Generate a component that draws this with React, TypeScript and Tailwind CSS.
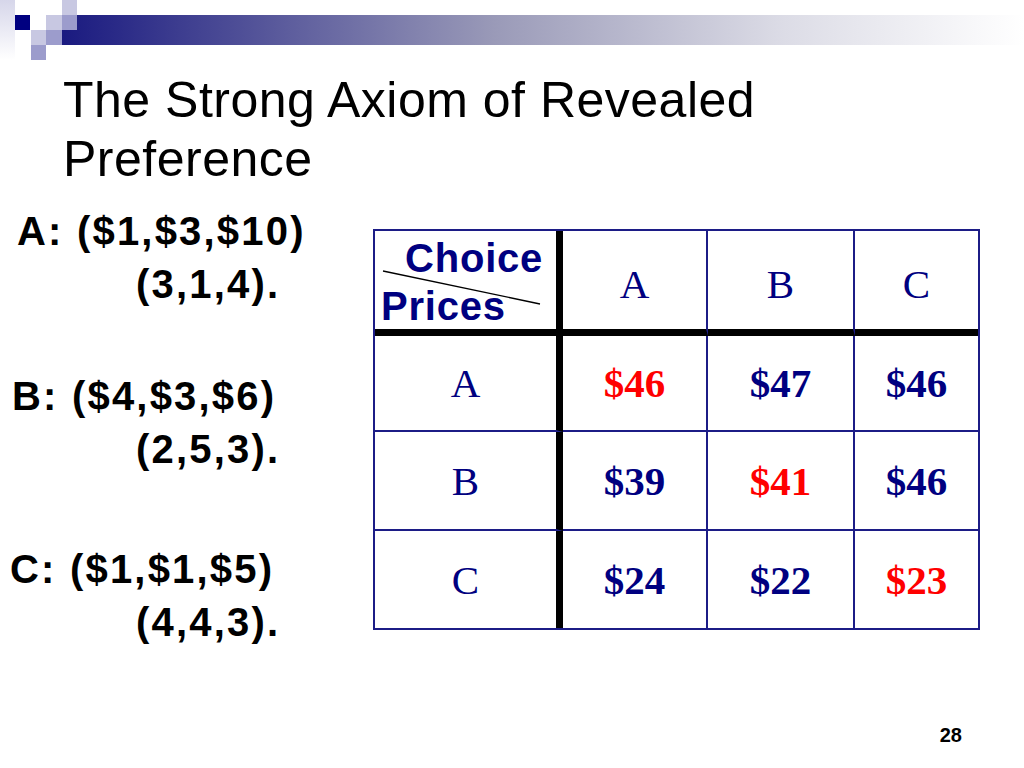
import React from "react";

const NAVY = "text-[#000080]";

function Header() {
  return (
    <svg width="1024" height="60" viewBox="0 0 1024 60" className="block">
      <defs>
        <linearGradient id="bar" x1="0" x2="1" y1="0" y2="0">
          <stop offset="0" stopColor="#1a1a80" />
          <stop offset="0.45" stopColor="#9a9ab8" />
          <stop offset="0.75" stopColor="#dcdce6" />
          <stop offset="1" stopColor="#ffffff" />
        </linearGradient>
        <linearGradient id="strip" x1="0" x2="0" y1="0" y2="1">
          <stop offset="0" stopColor="#d6d6ea" />
          <stop offset="1" stopColor="#ffffff" />
        </linearGradient>
      </defs>
      <rect x="0" y="0" width="15" height="60" fill="url(#strip)" />
      <rect x="62" y="15" width="962" height="30" fill="url(#bar)" />
      <rect x="62" y="0" width="15" height="15" fill="#c8c8e2" />
      <rect x="15" y="15" width="15" height="15" fill="#000080" />
      <rect x="46" y="15" width="16" height="15" fill="#c8c8e2" />
      <rect x="62" y="15" width="15" height="15" fill="#9c9ccc" />
      <rect x="31" y="30" width="15" height="15" fill="#c8c8e2" />
      <rect x="46" y="30" width="16" height="15" fill="#9c9ccc" />
      <rect x="31" y="45" width="15" height="15" fill="#9c9ccc" />
    </svg>
  );
}

function Cell({
  children,
  right,
  bottom,
  className = "",
}: {
  children?: React.ReactNode;
  right: "thick" | "thin" | "none";
  bottom: "thick" | "thin" | "none";
  className?: string;
}) {
  const r =
    right === "thick"
      ? "border-r-[7px] border-r-black"
      : right === "thin"
      ? "border-r-2 border-r-[#1c1c86]"
      : "";
  const b =
    bottom === "thick"
      ? "border-b-[7px] border-b-black"
      : bottom === "thin"
      ? "border-b-2 border-b-[#1c1c86]"
      : "";
  return (
    <div className={`flex items-center justify-center ${r} ${b} ${className}`}>
      {children}
    </div>
  );
}

const serif = "font-['Liberation_Serif','Times_New_Roman',serif] text-[41px] leading-[40px]";

function Val({ v, red }: { v: string; red?: boolean }) {
  return (
    <span className={`${serif} font-bold ${red ? "text-[#ff0000]" : NAVY}`}>{v}</span>
  );
}
function Lbl({ v }: { v: string }) {
  return <span className={`${serif} ${NAVY}`}>{v}</span>;
}

function Table() {
  const rows = [
    { l: "A", v: ["$46", "$47", "$46"], red: 0 },
    { l: "B", v: ["$39", "$41", "$46"], red: 1 },
    { l: "C", v: ["$24", "$22", "$23"], red: 2 },
  ];
  return (
    <div className="self-start mt-[24px] w-[607px] border-2 border-[#1c1c86] grid grid-cols-[188px_145px_147px_123px] grid-rows-[105px_96px_99px_97px]">
      <Cell right="thick" bottom="thick" className="relative !block">
        <div className="pt-[3px] font-['Liberation_Sans',Arial,sans-serif] font-bold text-[40px] leading-[48px] tracking-[0.8px] text-[#000080]">
          <div className="pl-[30px]">Choice</div>
          <div className="pl-[6px]">Prices</div>
        </div>
        <svg className="absolute left-0 top-0" width="181" height="98" viewBox="0 0 181 98">
          <line x1="8" y1="40" x2="165" y2="73" stroke="#000" strokeWidth="1.3" />
        </svg>
      </Cell>
      <Cell right="thin" bottom="thick" className="pt-2">
        <Lbl v="A" />
      </Cell>
      <Cell right="thin" bottom="thick" className="pt-2">
        <Lbl v="B" />
      </Cell>
      <Cell right="none" bottom="thick" className="pt-2">
        <Lbl v="C" />
      </Cell>
      {rows.map((row, ri) => {
        const bottom = ri === 2 ? "none" : "thin";
        return (
          <React.Fragment key={row.l}>
            <Cell right="thick" bottom={bottom}>
              <Lbl v={row.l} />
            </Cell>
            {row.v.map((v, ci) => (
              <Cell key={ci} right={ci === 2 ? "none" : "thin"} bottom={bottom}>
                <Val v={v} red={ci === row.red} />
              </Cell>
            ))}
          </React.Fragment>
        );
      })}
    </div>
  );
}

function Bundle({
  a,
  b,
  pl,
  mt,
}: {
  a: string;
  b: string;
  pl: string;
  mt: string;
}) {
  return (
    <div className={`${mt} font-['Liberation_Sans',Arial,sans-serif] font-bold text-[40px] leading-[53px] tracking-[2.2px] text-black`}>
      <div className={pl}>{a}</div>
      <div className="pl-[136px]">{b}</div>
    </div>
  );
}

export default function App() {
  return (
    <div className="w-[1024px] h-[768px] bg-white flex flex-col overflow-hidden">
      <Header />
      <div className="mt-[11px] pl-[63px] font-['Liberation_Sans',Arial,sans-serif] text-[50px] leading-[59px] tracking-[0.5px] text-black">
        <div>The Strong Axiom of Revealed</div>
        <div>Preference</div>
      </div>
      <div className="mt-[16px] flex items-start">
        <div className="w-[373px] flex flex-col">
          <Bundle a="A: ($1,$3,$10)" b="(3,1,4)." pl="pl-[17px]" mt="mt-0" />
          <Bundle a="B: ($4,$3,$6)" b="(2,5,3)." pl="pl-[12px]" mt="mt-[59px]" />
          <Bundle a="C: ($1,$1,$5)" b="(4,4,3)." pl="pl-[10px]" mt="mt-[67px]" />
        </div>
        <Table />
      </div>
      <div className="mt-auto pb-[23px] flex justify-end pr-[62px] font-['Liberation_Sans',Arial,sans-serif] font-bold text-[20px] leading-[20px] text-black">
        28
      </div>
    </div>
  );
}
